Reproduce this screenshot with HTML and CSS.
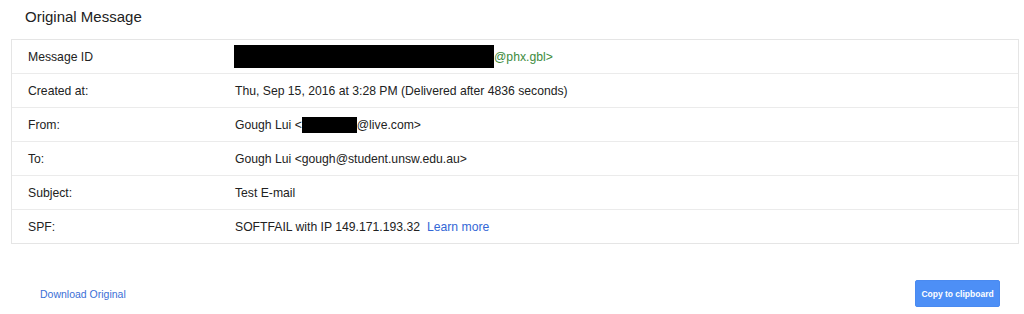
FILE: index.html
```html
<!DOCTYPE html>
<html lang="en">

<head>
    <meta charset="UTF-8">
    <title>Original Message</title>
    <link rel="stylesheet" href="styles.css">
</head>

<body>
    <h1 class="title">Original Message</h1>
    <div class="details">
        <div class="row">
            <span class="label">Message ID</span>
            <span class="value green"><span class="redact big"></span>@phx.gbl&gt;</span>
        </div>
        <div class="row">
            <span class="label">Created at:</span>
            <span class="value">Thu, Sep 15, 2016 at 3:28 PM (Delivered after 4836 seconds)</span>
        </div>
        <div class="row">
            <span class="label">From:</span>
            <span class="value">Gough Lui &lt;<span class="redact small"></span>@live.com&gt;</span>
        </div>
        <div class="row">
            <span class="label">To:</span>
            <span class="value">Gough Lui &lt;gough@student.unsw.edu.au&gt;</span>
        </div>
        <div class="row">
            <span class="label">Subject:</span>
            <span class="value">Test E-mail</span>
        </div>
        <div class="row">
            <span class="label">SPF:</span>
            <span class="value">SOFTFAIL with IP 149.171.193.32 <a href="#" class="learn">Learn more</a></span>
        </div>
    </div>
    <div class="footer">
        <a href="#" class="download">Download Original</a>
        <button class="copy">Copy to clipboard</button>
    </div>
</body>

</html>
```

FILE: styles.css
```css
* {
    margin: 0;
    padding: 0;
    box-sizing: border-box;
}

body {
    font-family: "Liberation Sans", Arial, sans-serif;
    color: #222;
    background: #fff;
    width: 1024px;
}

.title {
    font-size: 15px;
    font-weight: normal;
    color: #222;
    padding: 8px 0 0 25px;
    height: 39px;
}

.details {
    margin: 0 5px 0 11px;
    border: 1px solid #e5e5e5;
}

.row {
    display: grid;
    grid-template-columns: 207px 1fr;
    align-items: center;
    height: 34px;
    padding: 0 16px;
    font-size: 12.2px;
    border-top: 1px solid #ebebeb;
}

.row:first-child {
    border-top: none;
    height: 33px;
}

.value {
    display: flex;
    align-items: center;
}

.green {
    color: #3d8b3d;
}

.redact {
    display: inline-block;
    background: #000;
}

.redact.big {
    width: 260px;
    height: 23px;
    margin-left: -1px;
}

.redact.small {
    width: 55px;
    height: 16px;
}

.learn {
    color: #3367d6;
    text-decoration: none;
    margin-left: 7px;
}

.footer {
    display: flex;
    justify-content: space-between;
    align-items: center;
    padding: 36px 24px 0 40px;
}

.download {
    color: #3b6fd6;
    font-size: 10.5px;
    text-decoration: none;
}

.copy {
    width: 85px;
    height: 27px;
    background: #4d8ff6;
    color: #fff;
    border: 1px solid #4a8af0;
    border-radius: 2px;
    font-family: "Liberation Sans", Arial, sans-serif;
    font-size: 8.5px;
    font-weight: bold;
}
```
